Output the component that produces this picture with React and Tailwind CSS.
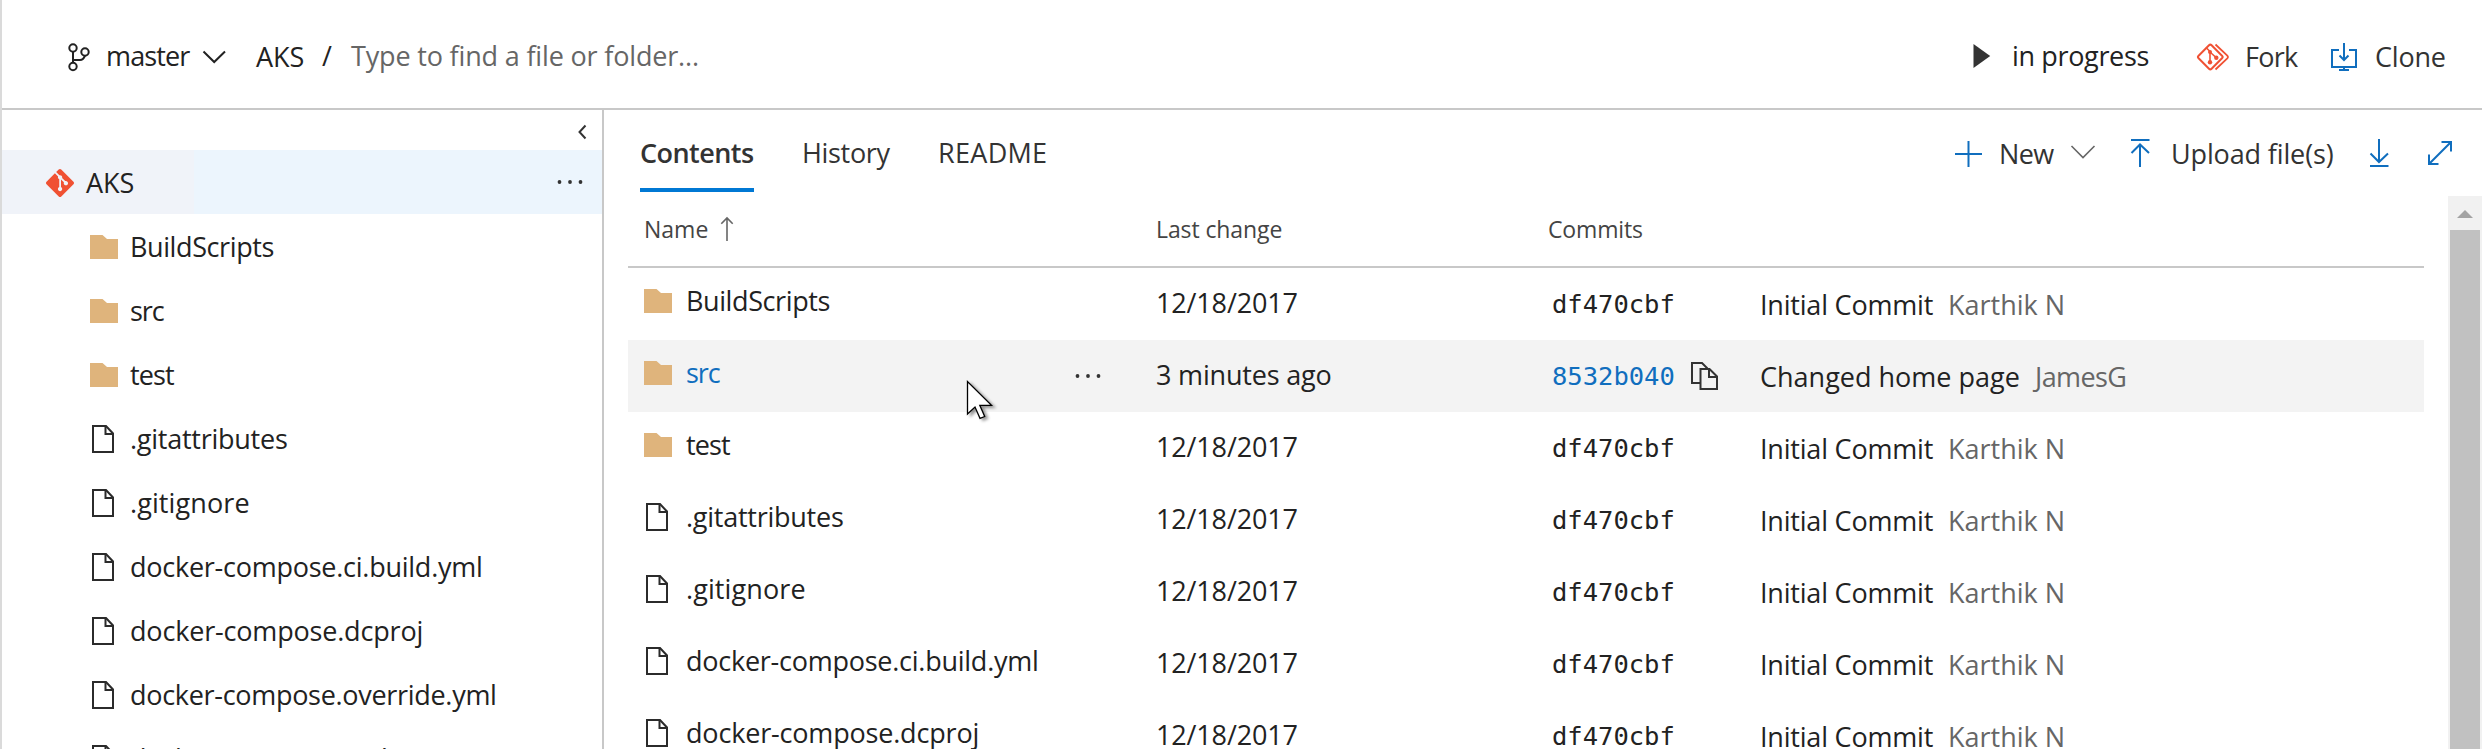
import React from "react";
import { SiGit } from "react-icons/si";

const tracking = {
  BuildScripts: "tracking-[-0.4px]",
  src: "tracking-[-1.1px]",
  test: "tracking-[-0.9px]",
  ".gitattributes": "tracking-[-0.25px]",
  ".gitignore": "tracking-[0.1px]",
  "docker-compose.ci.build.yml": "tracking-[-0.25px]",
  "docker-compose.dcproj": "tracking-[-0.18px]",
  "docker-compose.override.yml": "tracking-[-0.3px]",
  "docker-compose.yml": "tracking-[-0.25px]",
};

const treeItems = [
  { name: "BuildScripts", folder: true },
  { name: "src", folder: true },
  { name: "test", folder: true },
  { name: ".gitattributes" },
  { name: ".gitignore" },
  { name: "docker-compose.ci.build.yml" },
  { name: "docker-compose.dcproj" },
  { name: "docker-compose.override.yml" },
  { name: "docker-compose.yml" },
];

const initial = { date: "12/18/2017", hash: "df470cbf", message: "Initial Commit", author: "Karthik N" };
const rows = [
  { name: "BuildScripts", folder: true, ...initial },
  {
    name: "src",
    folder: true,
    active: true,
    date: "3 minutes ago",
    hash: "8532b040",
    message: "Changed home page",
    author: "JamesG",
  },
  { name: "test", folder: true, ...initial },
  { name: ".gitattributes", ...initial },
  { name: ".gitignore", ...initial },
  { name: "docker-compose.ci.build.yml", ...initial },
  { name: "docker-compose.dcproj", ...initial },
];

function FolderIcon() {
  return (
    <svg className="h-6 w-7 shrink-0" viewBox="0 0 28 24">
      <path d="M0 0H12.5L17 4H28V24H0Z" fill="#dfb47c" />
    </svg>
  );
}

function FileIcon() {
  return (
    <svg className="mr-[4px] ml-[2px] h-7 w-[22px] shrink-0" viewBox="0 0 22 28" fill="none" stroke="#2b2b2b" strokeWidth="2">
      <path d="M1 1H14L21 8.5V27H1Z" />
      <path d="M13.5 1V9H21" />
    </svg>
  );
}

function Dots() {
  return (
    <svg className="h-4 w-7 shrink-0" viewBox="0 0 28 16" fill="#333">
      <circle cx="3.5" cy="8" r="1.9" />
      <circle cx="14" cy="8" r="1.9" />
      <circle cx="24.5" cy="8" r="1.9" />
    </svg>
  );
}

function CopyIcon() {
  return (
    <svg className="ml-[15px] h-[30px] w-[29px] shrink-0" viewBox="1690 360 29 30" fill="none" stroke="#333" strokeWidth="2">
      <path d="M1700 382H1692V362H1702L1707.5 367.5" />
      <path d="M1700.500 368H1709.500L1717 375.500V388H1700.500Z" />
      <path d="M1709 368V376H1717" />
    </svg>
  );
}

function TopBar() {
  return (
    <header className="flex h-[110px] shrink-0 items-center border-b-2 border-[#c8c8c8] pt-1 pl-16">
      <svg className="h-9 w-[26px] shrink-0" viewBox="66 38 26 36" fill="none" stroke="#222" strokeWidth="2">
        <circle cx="73" cy="48" r="3.700" />
        <circle cx="73" cy="66.500" r="3.700" />
        <circle cx="85" cy="52" r="3.700" />
        <path d="M73 51.700V62.800M85 55.700C84 58.500 83 60 80 60H73" />
      </svg>
      <span className="ml-[14px] w-[95px] shrink-0 pb-px tracking-[-0.86px]">master</span>
      <svg className="h-9 w-[27px] shrink-0" viewBox="201 38 27 36" fill="none" stroke="#222" strokeWidth="2">
        <path d="M203.500 51.500L214.200 62L225 51.500" />
      </svg>
      <span className="ml-[28px] w-[66px] shrink-0 pt-px">AKS</span>
      <span className="w-[29px] shrink-0">/</span>
      <span className="shrink-0 tracking-[-0.17px] text-[#666]">Type to find a file or folder...</span>
      <div className="ml-auto flex w-[512px] shrink-0 items-center">
        <svg className="h-9 w-6 shrink-0" viewBox="1970 38 24 36">
          <path d="M1973.500 44L1990.200 56L1973.500 68Z" fill="#333" />
        </svg>
        <span className="ml-[18px] w-[183px] shrink-0 pb-px tracking-[-0.35px]">in progress</span>
        <svg className="h-9 w-[37px] shrink-0" viewBox="2195 38 37 36" fill="none" stroke="#f05133" strokeWidth="2" strokeLinejoin="round">
          <path d="M2209 45.300Q2210.300 44 2211.600 45.300L2222 55.700Q2223.300 57 2222 58.300L2211.600 68.700Q2210.300 70 2209 68.700L2198.600 58.300Q2197.300 57 2198.600 55.700Z" />
          <path d="M2215.500 44.500L2227.300 55.700Q2228.600 57 2227.300 58.300L2215.500 69.500" strokeWidth="1.800" />
          <path d="M2206 47.500L2210 51.500V62.500M2210 52L2216 57.500" strokeWidth="1.600" />
          <g fill="#f05133" stroke="none">
            <circle cx="2210" cy="52" r="2" />
            <circle cx="2210" cy="62.300" r="2.200" />
            <circle cx="2216.300" cy="57.700" r="2.200" />
          </g>
        </svg>
        <span className="ml-[13px] w-[84px] shrink-0 pt-[2px] tracking-[-0.7px] text-[#333]">Fork</span>
        <svg className="h-9 w-[31px] shrink-0" viewBox="2329 38 31 36" fill="none" stroke="#106ebe" strokeWidth="2">
          <path d="M2339 50H2332V67H2356V50H2349" />
          <path d="M2344 43V60M2339.500 55.500L2344 60L2348.500 55.500M2344 67V70M2339 70H2349" />
        </svg>
        <span className="ml-[15px] shrink-0 pt-[2px] tracking-[-0.2px] text-[#333]">Clone</span>
      </div>
    </header>
  );
}

function Sidebar() {
  return (
    <aside className="w-[602px] shrink-0 border-r-2 border-[#c8c8c8]">
      <div className="flex h-10 items-center justify-end pr-3.5 pt-[3px]">
        <svg className="h-4 w-[11px]" viewBox="0 0 11 16" fill="none" stroke="#333" strokeWidth="2">
          <path d="M8.500 1.500L2.500 8L8.500 14.500" />
        </svg>
      </div>
      <div className="flex h-16 items-center bg-[linear-gradient(90deg,#f0f3f9_192px,#ecf5fd_192px)] pr-[18px] pl-11">
        <SiGit className="mt-0.5 h-7 w-7 text-[#f05133]" />
        <span className="ml-[12px] pt-[2px]">AKS</span>
        <span className="ml-auto">
          <Dots />
        </span>
      </div>
      {treeItems.map((item) => (
        <div key={item.name} className="flex h-16 items-center pl-[88px]">
          <span className="mt-0.5 flex w-10 shrink-0">{item.folder ? <FolderIcon /> : <FileIcon />}</span>
          <span className={`pt-[2px] ${tracking[item.name]}`}>{item.name}</span>
        </div>
      ))}
    </aside>
  );
}

function Toolbar() {
  return (
    <div className="flex h-[86px] shrink-0 items-start pl-9">
      <div className="h-[82px] w-[114px] shrink-0 border-b-4 border-[#0078d4] pt-[24px] font-semibold tracking-[-0.55px] text-[#333]">
        Contents
      </div>
      <div className="ml-[48px] w-[136px] shrink-0 pt-[24px] tracking-[-0.33px] text-[#333]">History</div>
      <div className="shrink-0 pt-[24px] tracking-[0.3px] text-[#333]">README</div>
      <div className="ml-auto flex h-20 w-[529px] shrink-0 items-center pt-2 text-[#333]">
        <svg className="h-9 w-[32px] shrink-0" viewBox="1953 136 32 36" fill="none" stroke="#106ebe" strokeWidth="2">
          <path d="M1955 154H1982M1968.500 141V167" />
        </svg>
        <span className="ml-[14px] w-[70px] shrink-0 pb-px tracking-[-0.6px]">New</span>
        <svg className="h-9 w-[28px] shrink-0" viewBox="2069 136 28 36" fill="none" stroke="#666" strokeWidth="1.600">
          <path d="M2071.500 146L2083 157.500L2094.500 146" />
        </svg>
        <svg className="ml-[32px] h-9 w-[24px] shrink-0" viewBox="2129 136 24 36" fill="none" stroke="#106ebe" strokeWidth="2">
          <path d="M2131 140H2149.500M2140 167V145M2131.500 153L2140 144.500L2149 153" />
        </svg>
        <span className="ml-[18px] w-[196px] shrink-0 pb-px tracking-[-0.14px]">Upload file(s)</span>
        <svg className="h-9 w-[24px] shrink-0" viewBox="2367 136 24 36" fill="none" stroke="#106ebe" strokeWidth="2">
          <path d="M2370 166H2388.500M2379 139V162M2370.500 153.500L2379 162L2388 153.500" />
        </svg>
        <svg className="ml-[34px] h-9 w-[29px] shrink-0" viewBox="2425 136 29 36" fill="none" stroke="#106ebe" strokeWidth="2">
          <path d="M2429 164L2451 142M2441.500 142H2451V151.500M2429 154.500V164H2438.500" />
        </svg>
      </div>
    </div>
  );
}

function FileTable() {
  return (
    <div className="w-[1796px] shrink-0">
      <div className="flex h-[72px] items-center border-b-2 border-[#c8c8c8] pb-[4px] text-[23px] text-[#444]">
        <div className="flex w-[528px] shrink-0 items-center pl-4">
          <span className="w-[76px]">Name</span>
          <svg className="h-[26px] w-[14px]" viewBox="0 0 14 26" fill="none" stroke="#666" strokeWidth="1.600">
            <path d="M7 25V2M1.300 7.800L7 2L12.700 7.800" />
          </svg>
        </div>
        <span className="w-[392px] shrink-0 tracking-[-0.1px]">Last change</span>
        <span className="tracking-[-0.15px]">Commits</span>
      </div>
      {rows.map((row) => (
        <div key={row.name} className={row.active ? "flex h-[72px] items-center bg-[#f3f3f3]" : "flex h-[72px] items-center"}>
          <div className="flex w-[446px] shrink-0 items-center pb-[7px] pl-4">
            <span className="mt-px flex w-[42px] shrink-0">{row.folder ? <FolderIcon /> : <FileIcon />}</span>
            <span className={row.active ? `${tracking[row.name]} text-[#106ebe]` : tracking[row.name]}>{row.name}</span>
          </div>
          <div className="w-[82px] shrink-0">{row.active && <Dots />}</div>
          <div className={row.active ? "w-[396px] shrink-0 pb-[3px] tracking-[-0.18px]" : "w-[396px] shrink-0 pb-[3px] tracking-[-0.15px]"}>
            {row.date}
          </div>
          <div className="flex w-[208px] shrink-0 items-center">
            <span
              className={
                row.active
                  ? "font-['DejaVu_Sans_Mono'] text-[25.5px] text-[#106ebe]"
                  : "font-['DejaVu_Sans_Mono'] text-[25.5px]"
              }
            >
              {row.hash}
            </span>
            {row.active && <CopyIcon />}
          </div>
          <div className={row.active ? "w-[272px] shrink-0 pt-[2px]" : "w-[188px] shrink-0 pt-[2px] tracking-[-0.2px]"}>{row.message}</div>
          <div className={row.active ? "pt-[2px] pl-[3px] tracking-[-0.6px] text-[#666]" : "pt-[2px] text-[#666]"}>{row.author}</div>
        </div>
      ))}
    </div>
  );
}

function Scrollbar() {
  return (
    <div className="ml-auto flex w-[34px] shrink-0 flex-col bg-[#f1f1f1] px-[2px]">
      <div className="flex h-[34px] shrink-0 items-center justify-center pt-[2px]">
        <svg className="h-2 w-4" viewBox="0 0 16 8">
          <path d="M8 0L16 8H0Z" fill="#a3a3a3" />
        </svg>
      </div>
      <div className="flex-1 bg-[#c1c1c1]" />
    </div>
  );
}

function MousePointer() {
  return (
    <svg
      className="pointer-events-none absolute top-[378px] left-[962px] h-[46px] w-[34px] drop-shadow-[3px_2px_1.5px_rgba(0,0,0,0.4)]"
      viewBox="964 378 34 46"
    >
      <path
        d="M967.500 381.500V414L975 407L980 418.300L984.700 416.500L979.800 405.300H991.500Z"
        fill="#fff"
        stroke="#000"
        strokeWidth="1.300"
      />
    </svg>
  );
}

export default function App() {
  return (
    <div className="relative flex h-[749px] w-[2482px] flex-col overflow-hidden border-l-2 border-[#dadada] bg-white font-['Open_Sans','Noto_Sans',sans-serif] text-[27px] leading-[38px] whitespace-nowrap text-[#222]">
      <TopBar />
      <div className="flex min-h-0 flex-1">
        <Sidebar />
        <main className="flex min-w-0 flex-1 flex-col">
          <Toolbar />
          <div className="flex min-h-0 flex-1 pl-6">
            <FileTable />
            <Scrollbar />
          </div>
        </main>
      </div>
      <MousePointer />
    </div>
  );
}
